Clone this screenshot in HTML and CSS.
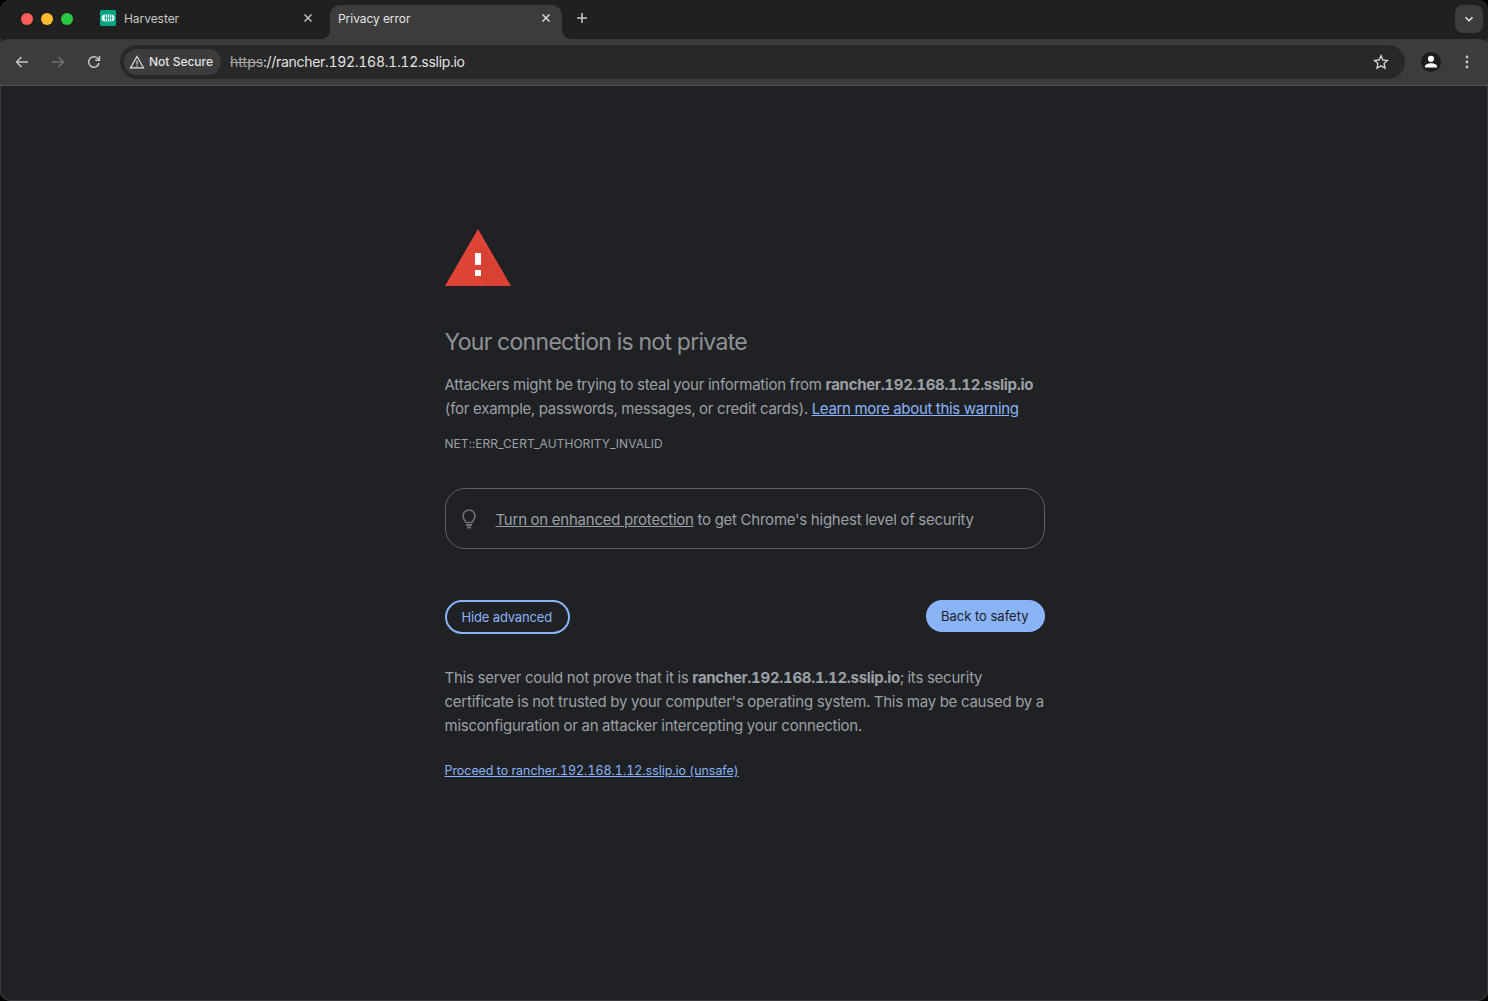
FILE: index.html
```html
<!DOCTYPE html>
<html lang="en">
<head>
<meta charset="UTF-8">
<title>Privacy error</title>
<link rel="stylesheet" href="styles.css">
</head>
<body>

<div class="tabstrip">
  <div class="lights">
    <span class="light red"></span>
    <span class="light yellow"></span>
    <span class="light green"></span>
  </div>
  <div class="tab">
    <svg class="favicon" width="16" height="16" viewBox="0 0 16 16">
      <rect width="16" height="16" rx="1.5" fill="#00a483"/>
      <rect x="1.500" y="4.500" width="13" height="7" rx="3.500" fill="#e8f7f3"/>
      <path d="M5.500 4.500v7M7.500 4.500v7M9.500 4.500v7M11.500 4.500v7M4 8h9" stroke="#00a483" stroke-width="0.700"/>
    </svg>
    <span class="tab-title">Harvester</span>
    <svg class="tab-close" width="10" height="10" viewBox="0 0 10 10"><path d="M1.500 1.500l7 7M8.500 1.500l-7 7" stroke="#c7c7c7" stroke-width="1.400"/></svg>
  </div>
  <div class="tab active">
    <span class="tab-title">Privacy error</span>
    <svg class="tab-close" width="10" height="10" viewBox="0 0 10 10"><path d="M1.500 1.500l7 7M8.500 1.500l-7 7" stroke="#e3e3e3" stroke-width="1.400"/></svg>
  </div>
  <svg class="new-tab" width="12" height="12" viewBox="0 0 12 12"><path d="M6 1v10M1 6h10" stroke="#c7c7c7" stroke-width="1.500"/></svg>
  <div class="tab-search">
    <svg width="10" height="10" viewBox="0 0 10 10"><path d="M1.500 3.200L5 6.700l3.500-3.500" fill="none" stroke="#e3e3e3" stroke-width="1.600"/></svg>
  </div>
</div>

<div class="toolbar">
  <div class="nav-buttons">
    <svg width="16" height="16" viewBox="0 0 16 16"><path d="M14 8H3M7.500 3L2.500 8l5 5" fill="none" stroke="#c7c7c7" stroke-width="1.500"/></svg>
    <svg width="16" height="16" viewBox="0 0 16 16"><path d="M2 8h11M8.500 3l5 5-5 5" fill="none" stroke="#6f6f6f" stroke-width="1.500"/></svg>
    <svg width="16" height="16" viewBox="0 0 16 16"><path d="M13 9a5.200 5.200 0 1 1-1.300-4.600L13 5.700" fill="none" stroke="#c7c7c7" stroke-width="1.500"/><path d="M13.500 2v4.300H9.200" fill="none" stroke="#c7c7c7" stroke-width="1.500"/></svg>
  </div>
  <div class="omnibox">
    <div class="chip">
      <svg width="16" height="14" viewBox="0 0 16 14"><path d="M8 1.500L14.500 12.800H1.500z" fill="none" stroke="#e3e3e3" stroke-width="1.200"/><path d="M8 5.500v4M8 10.300v1.100" stroke="#e3e3e3" stroke-width="1.100"/></svg>
      <span>Not Secure</span>
    </div>
    <div class="url"><span class="scheme">https</span>://rancher.192.168.1.12.sslip.io</div>
    <svg class="star" width="16" height="16" viewBox="0 0 16 16"><path d="M8 1.800l1.900 4.200 4.600.5-3.400 3.100.9 4.500L8 11.800l-4 2.300.9-4.500L1.500 6.500l4.600-.5z" fill="none" stroke="#d0d0d0" stroke-width="1.400"/></svg>
  </div>
  <div class="avatar">
    <svg width="20" height="20" viewBox="0 0 20 20"><circle cx="10" cy="6.800" r="3.100" fill="#fff"/><path d="M4 15.500v-1.300c0-2 3.500-3 6-3s6 1 6 3v1.300z" fill="#fff"/></svg>
  </div>
  <svg class="menu" width="4" height="14" viewBox="0 0 4 14"><circle cx="2" cy="2" r="1.400" fill="#c7c7c7"/><circle cx="2" cy="7" r="1.400" fill="#c7c7c7"/><circle cx="2" cy="12" r="1.400" fill="#c7c7c7"/></svg>
</div>

<div class="page">
  <div class="interstitial">
    <svg class="warn-icon" width="66" height="57" viewBox="0 0 66 57">
      <path d="M33 0L66 57H0z" fill="#e04437"/>
      <path d="M36 14L66 57H41L30 46z" fill="#d3402f" opacity="0.55"/>
      <rect x="30" y="24" width="6" height="12" fill="#fff"/>
      <rect x="30" y="41" width="6" height="6" fill="#fff"/>
    </svg>

    <h1>Your connection is not private</h1>

    <p class="intro">Attackers might be trying to steal your information from <strong>rancher.192.168.1.12.sslip.io</strong> (for example, passwords, messages, or credit cards). <a href="#" class="blue-link learn">Learn more about this warning</a></p>

    <div class="error-code">NET::ERR_CERT_AUTHORITY_INVALID</div>

    <div class="enhanced">
      <svg width="16" height="20" viewBox="0 0 16 20"><path d="M5 13.500c0-1.500-3-2.800-3-6.500a6 6 0 0 1 12 0c0 3.700-3 5-3 6.500z" fill="none" stroke="#6f7173" stroke-width="1.600"/><path d="M5 16h6M6 18.500h4" stroke="#6f7173" stroke-width="1.800"/></svg>
      <span class="enhanced-text"><a href="#" class="grey-link">Turn on enhanced protection</a> to get Chrome's highest level of security</span>
    </div>

    <div class="buttons">
      <button class="btn-outline">Hide advanced</button>
      <button class="btn-primary">Back to safety</button>
    </div>

    <p class="details">This server could not prove that it is <strong>rancher.192.168.1.12.sslip.io</strong>; its security certificate is not trusted by your computer's operating system. This may be caused by a misconfiguration or an attacker intercepting your connection.</p>

    <a href="#" class="blue-link proceed">Proceed to rancher.192.168.1.12.sslip.io (unsafe)</a>
  </div>
</div>

</body>
</html>
```

FILE: styles.css
```css
* {
  box-sizing: border-box;
}

html {
  height: 100%;
  background-color: #000;
}

body {
  margin: 0;
  height: 100%;
  background-color: #202124;
  border-radius: 10px;
  box-shadow: inset 0 0 0 1px #3a3b3e;
  font-family: Inter, "Liberation Sans", sans-serif;
  font-variant-numeric: tabular-nums;
  overflow: hidden;
}

.tabstrip {
  display: flex;
  align-items: flex-end;
  height: 39px;
  background-color: #202020;
  position: relative;
}

.lights {
  display: flex;
  align-items: center;
  gap: 8px;
  width: 92px;
  height: 39px;
  padding: 0 0 1px 21px;
  align-self: flex-start;
}

.light {
  width: 12px;
  height: 12px;
  border-radius: 50%;
}

.red { background-color: #ff5f57; }
.yellow { background-color: #febc2e; }
.green { background-color: #28c840; }

.tab {
  display: flex;
  align-items: center;
  width: 238px;
  height: 34px;
  padding: 0 17px 8px 8px;
  font-size: 12px;
  letter-spacing: -0.05px;
  color: #c7c7c7;
}

.favicon {
  margin-right: 8px;
  flex-shrink: 0;
}

.tab-title {
  flex: 1;
}

.tab.active {
  position: relative;
  width: 232px;
  padding-right: 11px;
  background-color: #3c3c3c;
  color: #e3e3e3;
  border-radius: 10px 10px 0 0;
}

/* the little curves where the active tab meets the toolbar */
.tab.active::before,
.tab.active::after {
  content: "";
  position: absolute;
  bottom: 0;
  width: 8px;
  height: 8px;
}

.tab.active::before {
  left: -8px;
  background: radial-gradient(circle at 0 0, transparent 7.5px, #3c3c3c 8px);
}

.tab.active::after {
  right: -8px;
  background: radial-gradient(circle at 100% 0, transparent 7.5px, #3c3c3c 8px);
}

.new-tab {
  margin: 0 0 15px 14px;
}

.tab-search {
  position: absolute;
  right: 5px;
  top: 5px;
  width: 28px;
  height: 28px;
  border-radius: 8px;
  background-color: #3c3c3c;
  display: flex;
  align-items: center;
  justify-content: center;
}

.toolbar {
  display: flex;
  align-items: center;
  height: 47px;
  background-color: #3c3c3c;
  border-bottom: 1px solid #4f4f4f;
  border-radius: 8px 8px 0 0;
  padding: 0 19px 1px 14px;
}

.nav-buttons {
  display: flex;
  gap: 20px;
  width: 106px;
}

.omnibox {
  display: flex;
  align-items: center;
  flex: 1;
  height: 34px;
  border-radius: 17px;
  background-color: #282828;
  padding: 0 16px 0 4px;
}

.chip {
  display: flex;
  align-items: center;
  gap: 4px;
  height: 26px;
  padding: 0 8px 0 5px;
  border-radius: 13px;
  background-color: #3c3c3c;
  color: #e3e3e3;
  font-size: 12px;
  font-weight: 500;
}

.url {
  flex: 1;
  margin-left: 9px;
  font-size: 14px;
  letter-spacing: -0.3px;
  color: #e3e3e3;
}

.scheme {
  text-decoration: line-through;
  letter-spacing: 0;
  color: #a8a8a8;
}

.avatar {
  width: 20px;
  height: 20px;
  margin-left: 16px;
  border-radius: 50%;
  background-color: #1c1c1c;
}

.menu {
  margin-left: 24px;
}

.page {
  display: flex;
  justify-content: center;
}

.interstitial {
  width: 600px;
  margin-left: 1px;
  padding-top: 143px;
  font-size: 15px;
  line-height: 24px;
  letter-spacing: -0.23px;
  color: #9aa0a6;
}

.warn-icon {
  display: block;
}

h1 {
  margin: 41px 0 16px;
  font-size: 23px;
  font-weight: 400;
  line-height: 30px;
  letter-spacing: -0.7px;
  color: #8e9296;
}

p {
  margin: 0;
}

strong {
  font-weight: 700;
  letter-spacing: -0.3px;
}

.blue-link {
  color: #8ab4f8;
}

.learn {
  letter-spacing: -0.3px;
}

.grey-link {
  color: #9aa0a6;
}

.error-code {
  margin-top: 11px;
  font-size: 12px;
  line-height: 24px;
  letter-spacing: 0.05px;
  text-transform: uppercase;
}

.enhanced {
  display: flex;
  align-items: center;
  gap: 19px;
  height: 61px;
  margin-top: 32px;
  padding-left: 15px;
  border: 1px solid #5f6164;
  border-radius: 20px;
}

.enhanced-text {
  padding-top: 2px;
}

.buttons {
  display: flex;
  justify-content: space-between;
  align-items: flex-start;
  margin-top: 51px;
}

button {
  font-family: inherit;
  font-size: 13px;
  border-radius: 17px;
}

.btn-outline {
  height: 34px;
  padding: 0 16px 0 15px;
  letter-spacing: -0.15px;
  background-color: transparent;
  color: #8ab4f8;
  border: 2px solid #8ab4f8;
}

.btn-primary {
  height: 32px;
  padding: 0 16px 0 15px;
  background-color: #8ab4f8;
  color: #202124;
  border: none;
}

.details {
  margin-top: 32px;
}

.proceed {
  display: block;
  margin-top: 21px;
  font-size: 12.4px;
  letter-spacing: 0;
}
```
